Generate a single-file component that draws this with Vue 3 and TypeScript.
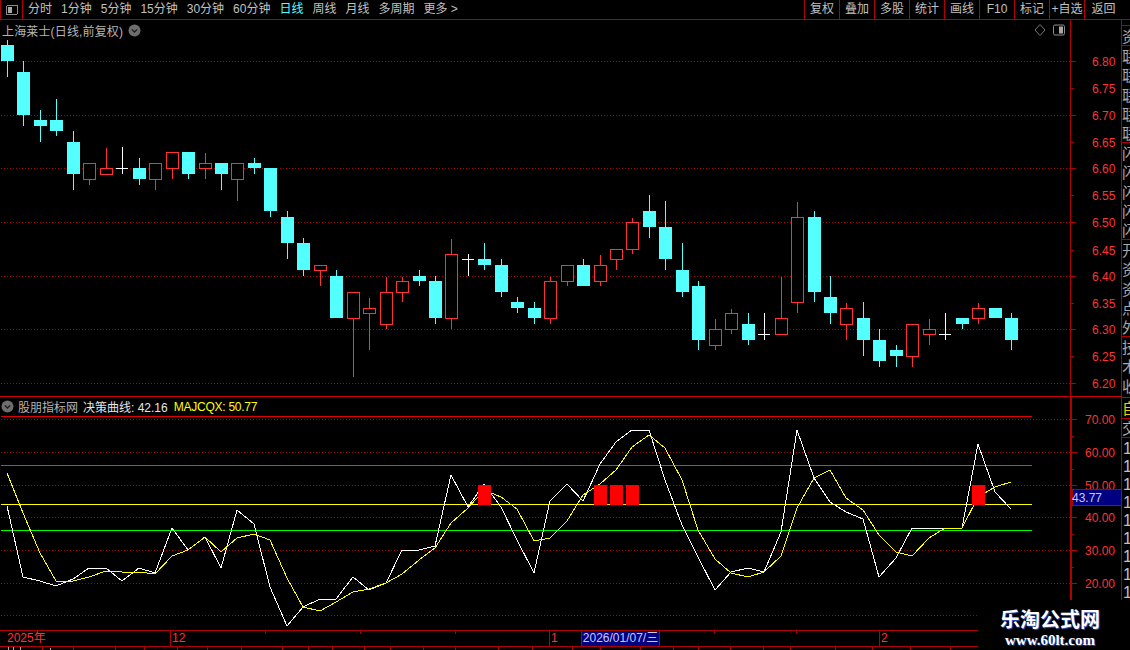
<script setup lang="ts">
type Kind = 'c' | 'r' | 'w'
// [top of body, bottom of body, high, low, kind] in page pixels
const raw: [number, number, number, number, Kind][] = [
  [45, 61, 40, 77, 'c'], [72, 115, 61, 126, 'c'], [120, 126, 110, 142, 'c'], [120, 131, 99, 136, 'c'],
  [142, 174, 131, 190, 'c'], [163, 180, 163, 185, 'r'], [168, 175, 148, 175, 'r'], [168, 168, 147, 174, 'w'],
  [168, 179, 158, 185, 'c'], [163, 180, 163, 190, 'r'], [152, 169, 152, 179, 'r'], [152, 174, 152, 179, 'c'],
  [163, 169, 153, 179, 'r'], [163, 174, 163, 190, 'c'], [163, 180, 163, 201, 'r'], [163, 168, 158, 174, 'c'],
  [168, 211, 168, 217, 'c'], [217, 243, 211, 259, 'c'], [243, 270, 238, 276, 'c'], [265, 271, 265, 286, 'r'],
  [276, 318, 270, 318, 'c'], [292, 319, 292, 377, 'r'], [308, 314, 298, 350, 'r'], [292, 325, 277, 329, 'r'],
  [281, 293, 277, 302, 'r'], [276, 281, 270, 286, 'c'], [281, 318, 276, 324, 'c'], [254, 319, 239, 329, 'r'],
  [259, 259, 254, 276, 'w'], [259, 265, 243, 270, 'c'], [265, 292, 259, 297, 'c'], [302, 308, 297, 313, 'c'],
  [308, 318, 302, 324, 'c'], [281, 319, 277, 324, 'r'], [265, 282, 265, 286, 'r'], [265, 286, 259, 286, 'c'],
  [265, 282, 255, 286, 'r'], [249, 260, 249, 270, 'r'], [222, 250, 218, 254, 'r'], [211, 227, 195, 238, 'c'],
  [227, 259, 201, 270, 'c'], [270, 292, 243, 297, 'c'], [286, 340, 281, 350, 'c'], [329, 346, 319, 350, 'r'],
  [313, 330, 309, 334, 'r'], [324, 340, 313, 345, 'c'], [334, 334, 313, 340, 'w'], [318, 335, 277, 335, 'r'],
  [217, 303, 202, 313, 'r'], [217, 292, 211, 302, 'c'], [297, 313, 276, 324, 'c'], [308, 325, 303, 340, 'r'],
  [318, 340, 302, 356, 'c'], [340, 361, 329, 367, 'c'], [350, 356, 345, 367, 'c'], [324, 357, 324, 367, 'r'],
  [329, 335, 319, 345, 'r'], [334, 334, 313, 340, 'w'], [318, 324, 318, 329, 'c'], [308, 319, 303, 324, 'r'],
  [308, 318, 308, 318, 'c'], [318, 340, 313, 350, 'c'],
]
const cx = (i: number): number => Math.round(7 + 16.46 * i)
const candles = raw.map(([t, b, h, l, k], i) => ({ x: cx(i), t, b, h, l, k, id: i }))

const whiteZ = [348, 561, 572, 589, 567, 535, 535, 574, 535, 548, 415, 481, 442, 535, 361, 403, 590, 709, 652, 628, 628, 562, 601, 578, 481, 481, 469, 256, 350, 283, 350, 450, 548, 334, 283, 334, 222, 155, 121, 121, 270, 405, 500, 600, 545, 535, 547, 425, 121, 265, 336, 365, 386, 562, 505, 415, 415, 415, 415, 162, 305, 358]
const yellowZ = [250, 370, 490, 574, 574, 562, 544, 547, 547, 553, 497, 480, 442, 487, 445, 432, 450, 565, 652, 664, 637, 605, 598, 580, 552, 510, 475, 400, 355, 300, 320, 358, 452, 445, 392, 315, 282, 240, 172, 135, 175, 270, 420, 507, 548, 562, 545, 497, 355, 265, 241, 325, 360, 435, 487, 497, 445, 415, 415, 320, 292, 277]
const toPts = (zs: number[]): string => zs.map((z, i) => `${cx(i)},${Math.round(z / 3 + 390)}`).join(' ')
const whitePts = toPts(whiteZ)
const yellowPts = toPts(yellowZ)

const signalIdx = [29, 36, 37, 38, 59]
const priceGrid = [61, 115, 168, 222, 276, 329, 383]
const indGrid = [419, 452, 485, 517, 550, 583, 615]

const priceLabels = [
  { t: '6.80', y: 61 }, { t: '6.75', y: 88 }, { t: '6.70', y: 115 }, { t: '6.65', y: 142 },
  { t: '6.60', y: 168 }, { t: '6.55', y: 195 }, { t: '6.50', y: 222 }, { t: '6.45', y: 250 },
  { t: '6.40', y: 276 }, { t: '6.35', y: 303 }, { t: '6.30', y: 329 }, { t: '6.25', y: 356 }, { t: '6.20', y: 383 },
]
const indLabels = [
  { t: '70.00', y: 419 }, { t: '60.00', y: 452 }, { t: '50.00', y: 485 },
  { t: '40.00', y: 517 }, { t: '30.00', y: 550 }, { t: '20.00', y: 583 },
]
const indMinor = [436, 469, 534, 567]

const menu = ['分时', '1分钟', '5分钟', '15分钟', '30分钟', '60分钟', '日线', '周线', '月线', '多周期', '更多 >']
const actions = ['复权', '叠加', '多股', '统计', '画线', 'F10', '标记', '+自选']
const sideGroups = [
  { h: 20, chars: ['资'] },
  { h: 97, chars: ['联', '联', '联', '联', '联'] },
  { h: 97, chars: ['闪', '闪', '闪', '闪', '闪'] },
  { h: 97, chars: ['开', '资', '资', '点', '外'] },
  { h: 61, chars: ['技', '术', '收'] },
]
const sideDigits = Array.from({ length: 9 }, (_, i) => i)
const timeTicks = [265, 360, 455, 714, 796]
const stripTicks = [42, 73, 115, 144, 177, 207, 241, 282, 308, 332, 364, 390, 423, 455, 498, 532, 572, 600, 640, 673, 698, 730, 763, 790, 835, 872, 910, 950]
const stripPath = stripTicks.map((x) => `M${x + 0.5} 0V4`).join('')
</script>

<template>
  <div class="screen">
    <header class="topbar">
      <div class="icon-cell">
        <svg width="14" height="12" viewBox="0 0 14 12" shape-rendering="crispEdges">
          <rect x="1.5" y="1.5" width="11" height="9" rx="1.5" fill="none" stroke="#8c8c8c" />
          <rect x="3" y="3" width="4" height="6" fill="#a8a8a8" />
        </svg>
      </div>
      <nav class="menu">
        <span v-for="m in menu" :key="m" :class="{ on: m === '日线' }">{{ m }}</span>
      </nav>
      <div class="actions">
        <span v-for="a in actions" :key="a" class="act">{{ a }}</span>
        <span class="act last">返回</span>
      </div>
    </header>

    <main class="body">
      <section class="charts">
        <div class="price-panel">
          <div class="title">
            <span class="stock">上海莱士(日线,前复权)</span>
            <svg class="chev" width="13" height="13" viewBox="0 0 13 13">
              <circle cx="6.5" cy="6.5" r="6" fill="#6e6e6e" />
              <path d="M3.8 5.4 6.5 8l2.7-2.6" fill="none" stroke="#1c1c1c" stroke-width="1.3" />
            </svg>
            <svg class="tools" width="34" height="14" viewBox="0 0 34 14">
              <path d="M6 1.5 11 7 6 12.5 1 7Z" fill="none" stroke="#777" />
              <rect x="19.5" y="2" width="11" height="10" rx="1.5" fill="none" stroke="#8c8c8c" />
              <rect x="25" y="3.5" width="4" height="7" fill="#a8a8a8" />
            </svg>
          </div>
          <svg class="plot" width="1070" height="356" viewBox="0 40 1070 356" shape-rendering="crispEdges">
            <line v-for="y in priceGrid" :key="y" x1="1" x2="1070" :y1="y + 0.5" :y2="y + 0.5" class="dots" />
            <g v-for="c in candles" :key="c.id">
              <template v-if="c.k === 'c'">
                <line :x1="c.x + 0.5" :x2="c.x + 0.5" :y1="c.h" :y2="c.l" stroke="#54ffff" />
                <rect :x="c.x - 6" :y="c.t" width="13" :height="c.b - c.t" fill="#54ffff" />
              </template>
              <template v-else-if="c.k === 'r'">
                <line :x1="c.x + 0.5" :x2="c.x + 0.5" :y1="c.h" :y2="c.t" stroke="#ff3232" />
                <line :x1="c.x + 0.5" :x2="c.x + 0.5" :y1="c.b" :y2="c.l" stroke="#ff3232" />
                <rect :x="c.x - 5.5" :y="c.t + 0.5" width="12" :height="c.b - c.t - 1" fill="#000" stroke="#ff3232" />
              </template>
              <template v-else>
                <line :x1="c.x + 0.5" :x2="c.x + 0.5" :y1="c.h" :y2="c.l" stroke="#fff" />
                <line :x1="c.x - 6" :x2="c.x + 6" :y1="c.t + 0.5" :y2="c.t + 0.5" stroke="#fff" />
              </template>
            </g>
          </svg>
        </div>

        <div class="ind-panel">
          <div class="ind-title">
            <svg width="13" height="13" viewBox="0 0 13 13">
              <circle cx="6.5" cy="6.5" r="6" fill="#6e6e6e" />
              <path d="M3.8 5.4 6.5 8l2.7-2.6" fill="none" stroke="#1c1c1c" stroke-width="1.3" />
            </svg>
            <span class="name">股朋指标网</span>
            <span class="w">决策曲线: 42.16</span>
            <span class="y">MAJCQX: 50.77</span>
          </div>
          <svg class="plot" width="1070" height="214" viewBox="0 416 1070 214" shape-rendering="crispEdges">
            <line v-for="y in indGrid" :key="y" x1="1" x2="1070" :y1="y + 0.5" :y2="y + 0.5" class="dots" />
            <line x1="1" x2="1032" y1="416.5" y2="416.5" stroke="#e00000" />
            <line x1="1" x2="1032" y1="465.5" y2="465.5" stroke="#c81ec8" />
            <line x1="1" x2="1032" y1="504.5" y2="504.5" stroke="#ffff00" />
            <line x1="1" x2="1032" y1="530.5" y2="530.5" stroke="#00ff00" />
            <polyline :points="whitePts" fill="none" stroke="#fff" />
            <polyline :points="yellowPts" fill="none" stroke="#ffff00" />
            <rect v-for="i in signalIdx" :key="i" :x="cx(i) - 6" y="485" width="13" height="20" fill="#ff0000" />
          </svg>
        </div>

        <div class="time-axis">
          <svg class="time-ticks" width="1070" height="3" viewBox="0 0 1070 3" shape-rendering="crispEdges">
            <line v-for="x in timeTicks" :key="x" :x1="x + 0.5" :x2="x + 0.5" y1="0" y2="3" stroke="#b00000" />
          </svg>
          <span class="seg" style="width: 170px">2025年</span>
          <span class="seg tick" style="width: 379px">12</span>
          <span class="seg tick" style="width: 32px">1</span>
          <span class="date">2026/01/07/三</span>
          <span class="seg" style="width: 219px"></span>
          <span class="seg tick" style="width: 192px">2</span>
        </div>
        <div class="strip">
          <svg width="1070" height="4" viewBox="0 0 1070 4" shape-rendering="crispEdges">
            <path :d="stripPath" stroke="#b00000" />
            <path d="M8.5 0V3M13.5 0V3M20.5 0V3M50.5 1V3" stroke="#aaa" />
          </svg>
        </div>
      </section>

      <aside class="axes">
        <svg class="axis-top" width="50" height="376" viewBox="1071 20 50 376" shape-rendering="crispEdges">
          <template v-for="(l, i) in priceLabels" :key="l.t">
            <line x1="1071" :x2="i % 2 === 0 ? 1076 : 1074" :y1="l.y + 0.5" :y2="l.y + 0.5" stroke="#b00000" />
            <text x="1092" :y="l.y + 5" class="ax">{{ l.t }}</text>
          </template>
        </svg>
        <svg class="axis-bottom" width="49" height="233" viewBox="1072 397 49 233" shape-rendering="crispEdges">
          <template v-for="l in indLabels" :key="l.t">
            <line x1="1072" x2="1077" :y1="l.y + 0.5" :y2="l.y + 0.5" stroke="#b00000" />
            <text x="1085" :y="l.y + 5" class="ax">{{ l.t }}</text>
          </template>
          <line v-for="y in indMinor" :key="y" x1="1072" x2="1074" :y1="y + 0.5" :y2="y + 0.5" stroke="#b00000" />
          <rect x="1072" y="489.5" width="50" height="16" fill="#000080" stroke="#b00000" />
          <text x="1072" y="502" class="cur">43.77</text>
        </svg>
      </aside>

      <aside class="side">
        <div class="side-gap"></div>
        <div v-for="(g, gi) in sideGroups" :key="gi" class="side-group" :style="{ height: g.h + 'px' }">
          <span v-for="(ch, ci) in g.chars" :key="ci" class="side-ch">{{ ch }}</span>
        </div>
        <div class="side-low">
          <span class="side-y">自</span>
          <span class="side-j">交</span>
          <div class="side-digits">
            <span v-for="d in sideDigits" :key="d">1</span>
          </div>
        </div>
      </aside>
    </main>

    <div class="logo">
      <div class="logo-cn">乐淘公式网</div>
      <div class="logo-en">www.60lt.com</div>
    </div>
  </div>
</template>

<style>
html, body { background: #000; }
</style>

<style scoped>
.screen {
  position: relative;
  width: 1130px;
  height: 650px;
  background: #000;
  overflow: hidden;
  display: flex;
  flex-direction: column;
  font-family: "Liberation Sans", "Noto Sans CJK SC", sans-serif;
  font-size: 12px;
  color: #c0c0c0;
}
.topbar {
  height: 20px;
  flex: none;
  display: flex;
  border-bottom: 1px solid #b00000;
  box-sizing: border-box;
  line-height: 19px;
}
.icon-cell {
  width: 23px;
  box-sizing: border-box;
  border-left: 1px solid #b00000;
  border-right: 1px solid #b00000;
  display: flex;
  align-items: center;
  justify-content: center;
}
.menu {
  display: flex;
  gap: 9px;
  padding-left: 5px;
}
.menu .on { color: #54ffff; }
.actions {
  margin-left: auto;
  display: flex;
}
.act {
  width: 35px;
  box-sizing: border-box;
  border-left: 1px solid #b00000;
  text-align: center;
  white-space: nowrap;
}
.act.last { width: 46px; padding-right: 8px; }
.body {
  flex: 1;
  display: flex;
  min-height: 0;
}
.charts {
  width: 1070px;
  flex: none;
  display: flex;
  flex-direction: column;
}
.plot { display: block; }
.price-panel { height: 376px; }
.title {
  height: 20px;
  display: flex;
  align-items: center;
  padding-left: 2px;
  gap: 5px;
  color: #b4b4b4;
}
.stock { letter-spacing: 0.15px; }
.tools { margin-left: auto; margin-right: 2px; }
.ind-panel {
  border-top: 1px solid #c80000;
  display: flex;
  flex-direction: column;
}
.ind-title {
  height: 19px;
  display: flex;
  align-items: center;
  padding-left: 1px;
}
.ind-title .name { margin-left: 4px; color: #b4b4b4; }
.ind-title .w { margin-left: 5px; color: #e6e6e6; }
.ind-title .y { margin-left: 6px; color: #ffff00; letter-spacing: -0.25px; }
.dots { stroke: #a80000; stroke-dasharray: 1 2; }
.time-axis {
  position: relative;
  height: 16px;
  box-sizing: border-box;
  border-top: 1px solid #b00000;
  display: flex;
  align-items: stretch;
  line-height: 15px;
  color: #ff3232;
}
.time-ticks { position: absolute; left: 0; top: 0; }
.seg { box-sizing: border-box; padding-left: 7px; flex: none; }
.seg.tick { border-left: 1px solid #b00000; padding-left: 1px; }
.date {
  flex: none;
  width: 79px;
  box-sizing: border-box;
  background: #000080;
  border-left: 1px solid #b00000;
  border-right: 1px solid #b00000;
  color: #c8c8ff;
  text-align: center;
  white-space: nowrap;
}
.strip {
  height: 4px;
  border-top: 1px solid #b00000;
}
.strip svg { display: block; }
.axes {
  width: 51px;
  flex: none;
  display: flex;
  flex-direction: column;
}
.axis-top {
  display: block;
  flex: none;
  border-left: 1px solid #b00000;
}
.axis-bottom {
  display: block;
  flex: none;
  border-top: 1px solid #c80000;
  border-left: 2px solid #b00000;
}
.ax {
  font-family: "Liberation Sans", sans-serif;
  font-size: 12px;
  fill: #ff3232;
}
.cur {
  font-family: "Liberation Sans", sans-serif;
  font-size: 12px;
  fill: #c8c8ff;
}
.side {
  width: 9px;
  flex: none;
  display: flex;
  flex-direction: column;
  border-left: 1px solid #b00000;
  box-sizing: border-box;
  overflow: hidden;
}
.side-gap { height: 5px; flex: none; }
.side-group {
  flex: none;
  box-sizing: border-box;
  border-top: 1px solid #b00000;
  overflow: hidden;
}
.side-ch {
  display: block;
  height: 19.3px;
  line-height: 19px;
  font-size: 15px;
  width: 16px;
  font-family: "Noto Sans CJK SC", sans-serif;
  color: #a8a8a8;
}
.side-low {
  flex: none;
  border-top: 1px solid #c80000;
  display: flex;
  flex-direction: column;
}
.side-y {
  height: 20px;
  line-height: 20px;
  font-size: 15px;
  width: 16px;
  color: #e6d200;
  font-family: "Noto Sans CJK SC", sans-serif;
  border-bottom: 1px solid #b00000;
}
.side-j {
  height: 18px;
  line-height: 18px;
  font-size: 15px;
  width: 16px;
  color: #b4b4b4;
  font-family: "Noto Sans CJK SC", sans-serif;
  border-bottom: 1px solid #b00000;
}
.side-digits {
  display: flex;
  flex-direction: column;
  padding-top: 2px;
  padding-left: 1px;
}
.side-digits span {
  height: 18px;
  line-height: 18px;
  font-size: 16px;
  color: #c0c0c0;
}
.logo {
  position: absolute;
  left: 978px;
  top: 600px;
  width: 152px;
  height: 50px;
  background: #000;
  box-sizing: border-box;
  padding-right: 8px;
  padding-top: 7px;
  display: flex;
  flex-direction: column;
  align-items: center;
  color: #fff;
}
.logo-cn {
  font-family: "Noto Sans CJK SC", sans-serif;
  font-weight: 700;
  font-size: 20px;
  line-height: 24px;
  white-space: nowrap;
  text-shadow: 1px 1px 1px #2a50c0;
}
.logo-en {
  font-family: "Liberation Serif", serif;
  font-weight: 700;
  font-size: 15px;
  line-height: 16px;
  margin-top: 1px;
  white-space: nowrap;
  text-shadow: 1px 1px 1px #2a50c0;
}
</style>
